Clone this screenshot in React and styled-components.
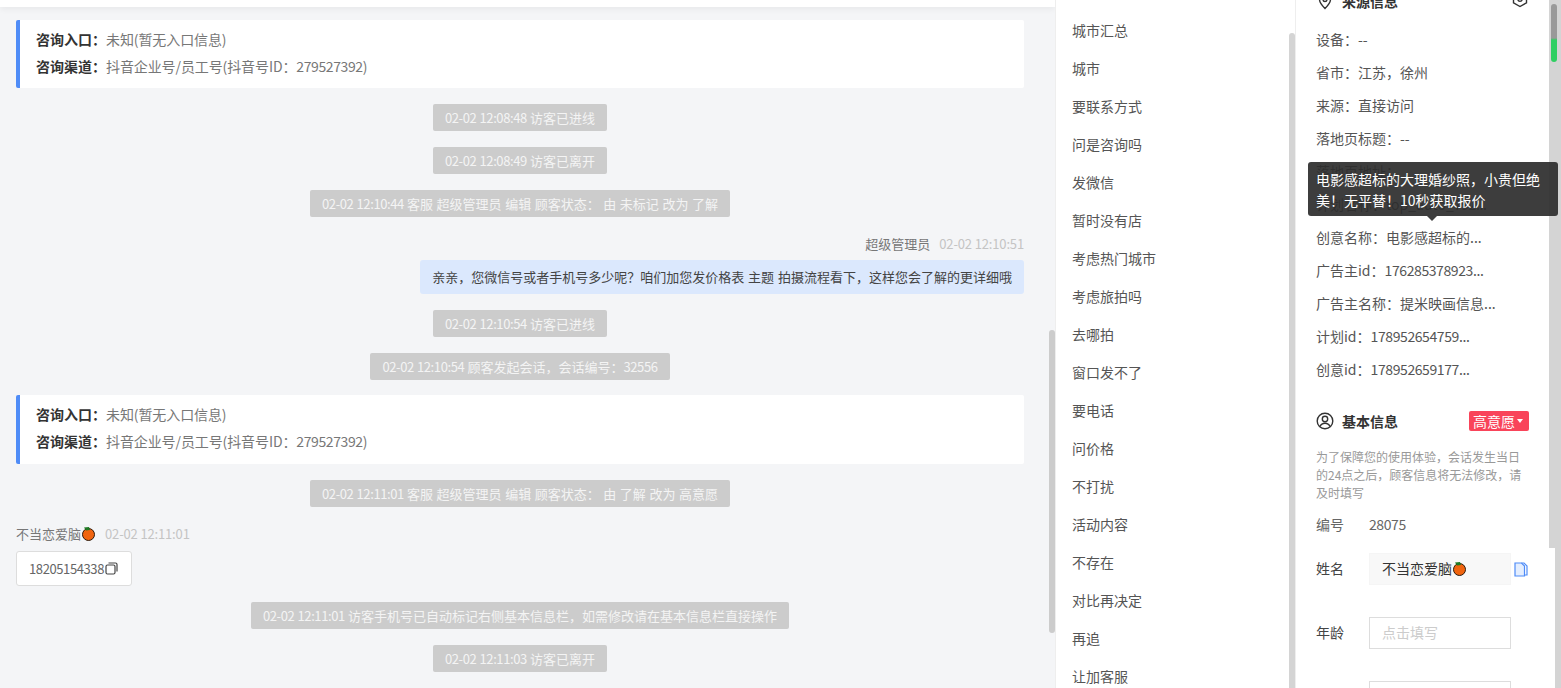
import styled, { createGlobalStyle } from "styled-components";

const GlobalStyle = createGlobalStyle`
  html, body { margin: 0; padding: 0; height: 100%; overflow: hidden; background: #fff; }
  body { font-family: "Noto Sans CJK SC", "Liberation Sans", sans-serif; font-size: 14px; color: #333; }
  * { box-sizing: border-box; }
`;

const tags = ["城市汇总", "城市", "要联系方式", "问是咨询吗", "发微信", "暂时没有店", "考虑热门城市", "考虑旅拍吗", "去哪拍", "窗口发不了", "要电话", "问价格", "不打扰", "活动内容", "不存在", "对比再决定", "再追", "让加客服"];

const sourceRows = [
  ["设备", "--"],
  ["省市", "江苏，徐州"],
  ["来源", "直接访问"],
  ["落地页标题", "--"],
  ["落地页地址", ""],
  ["计划名称", "top_auto_792..."],
  ["创意名称", "电影感超标的..."],
  ["广告主id", "176285378923..."],
  ["广告主名称", "提米映画信息..."],
  ["计划id", "178952654759..."],
  ["创意id", "178952659177..."],
];

// digits in the original font run a bit narrower than the fallback
function Digits({ children }) {
  return children.split(/(\d[\d:.\- ]*)/).map((part, i) =>
    i % 2 ? <Narrow key={i}>{part}</Narrow> : part
  );
}

function Orange() {
  return (
    <svg width="15" height="15" viewBox="0 0 15 15" style={{ flex: "none" }}>
      <circle cx="7.5" cy="8.5" r="6" fill="#f0640f" stroke="#2b1a0c" strokeWidth="1" />
      <path d="M3 1.5 L8 1 L9 4 L5 4.5 Z" fill="#1f7a25" />
    </svg>
  );
}

function Notice({ tall }) {
  return (
    <NoticeCard $tall={tall}>
      <NoticeRow><b>咨询入口：</b>未知(暂无入口信息)</NoticeRow>
      <NoticeRow><b>咨询渠道：</b><Digits>抖音企业号/员工号(抖音号ID：279527392)</Digits></NoticeRow>
    </NoticeCard>
  );
}

function Pill({ children }) {
  return <SystemPill><Digits>{children}</Digits></SystemPill>;
}

export default function App() {
  return (
    <>
      <GlobalStyle />
      <Page>
        <ChatPanel>
          <TopShade />
          <Messages>
            <Notice />
            <Pill>02-02 12:08:48 访客已进线</Pill>
            <Pill>02-02 12:08:49 访客已离开</Pill>
            <Pill>02-02 12:10:44 客服 超级管理员 编辑 顾客状态： 由 未标记 改为 了解</Pill>
            <MessageGroup $mine>
              <Meta>超级管理员<MetaTime><Digits>02-02 12:10:51</Digits></MetaTime></Meta>
              <AgentBubble>亲亲，您微信号或者手机号多少呢？咱们加您发价格表 主题 拍摄流程看下，这样您会了解的更详细哦</AgentBubble>
            </MessageGroup>
            <Pill>02-02 12:10:54 访客已进线</Pill>
            <Pill>02-02 12:10:54 顾客发起会话，会话编号：32556</Pill>
            <Notice tall />
            <Pill>02-02 12:11:01 客服 超级管理员 编辑 顾客状态： 由 了解 改为 高意愿</Pill>
            <MessageGroup>
              <Meta>不当恋爱脑<Orange /><MetaTime><Digits>02-02 12:11:01</Digits></MetaTime></Meta>
              <VisitorBubble>
                <Digits>18205154338</Digits>
                <svg width="13" height="13" viewBox="0 0 13 13" fill="none" stroke="#444" strokeWidth="1.2">
                  <rect x="1" y="3" width="9" height="9" rx="1.5" />
                  <path d="M3.5 1h7a1.5 1.5 0 0 1 1.5 1.5v7" />
                </svg>
              </VisitorBubble>
            </MessageGroup>
            <Pill>02-02 12:11:01 访客手机号已自动标记右侧基本信息栏，如需修改请在基本信息栏直接操作</Pill>
            <Pill>02-02 12:11:03 访客已离开</Pill>
          </Messages>
          <ChatThumb />
        </ChatPanel>

        <TagPanel>
          {tags.map((t) => <TagItem key={t}>{t}</TagItem>)}
          <TagThumb />
        </TagPanel>

        <InfoPanel>
          <SectionHead>
            <svg width="18" height="18" viewBox="0 0 18 18" fill="none" stroke="#333" strokeWidth="1.4">
              <path d="M9 16.5c-3-3-5.500-5.600-5.500-9a5.500 5.500 0 0 1 11 0c0 3.400-2.500 6-5.500 9z" />
              <circle cx="9" cy="7.500" r="2" />
            </svg>
            <SectionTitle>来源信息</SectionTitle>
            <HeadIcon>
              <svg width="18" height="18" viewBox="0 0 18 18" fill="none" stroke="#333" strokeWidth="1.4">
                <path d="M9 1.500l6.500 3.700v7.600L9 16.500l-6.500-3.700V5.200z" />
                <circle cx="9" cy="9" r="2.200" />
              </svg>
            </HeadIcon>
          </SectionHead>
          <SourceList>
            {sourceRows.map(([k, v]) => <SourceRow key={k}><Digits>{`${k}：${v}`}</Digits></SourceRow>)}
            <Tooltip>电影感超标的大理婚纱照，小贵但绝美！无平替！10秒获取报价</Tooltip>
          </SourceList>
          <BasicHead>
            <svg width="18" height="18" viewBox="0 0 18 18" fill="none" stroke="#333" strokeWidth="1.4">
              <circle cx="9" cy="9" r="7.800" />
              <circle cx="9" cy="7" r="2.700" />
              <path d="M4 14.500c1-2.300 3-3.300 5-3.300s4 1 5 3.300" />
            </svg>
            <SectionTitle>基本信息</SectionTitle>
            <IntentBadge>高意愿<Caret /></IntentBadge>
          </BasicHead>
          <Hint>为了保障您的使用体验，会话发生当日的24点之后，顾客信息将无法修改，请及时填写</Hint>
          <FieldRow $h={38} $muted>
            <FieldLabel>编号</FieldLabel>
            <FieldValue><Digits>28075</Digits></FieldValue>
          </FieldRow>
          <FieldRow $h={50}>
            <FieldLabel>姓名</FieldLabel>
            <FieldBox $filled>不当恋爱脑<Orange /></FieldBox>
            <CopyIcon viewBox="0 0 14 15" width="14" height="15" fill="#e4eefe" stroke="#4f8cf7" strokeWidth="1.2">
              <path d="M1 1h6.500L10.500 4v10H1z" />
              <path d="M7.500 1h2.500L13 4v9h-2.500" fill="none" />
            </CopyIcon>
          </FieldRow>
          <FieldRow $h={78}>
            <FieldLabel>年龄</FieldLabel>
            <FieldBox>点击填写</FieldBox>
          </FieldRow>
          <FieldRow $h={50}>
            <FieldLabel />
            <FieldBox />
          </FieldRow>
          <OuterTrack />
          <InnerThumb />
          <MiniThumb />
        </InfoPanel>
      </Page>
    </>
  );
}

const Page = styled.div`
  display: flex;
  width: 1561px;
  height: 688px;
  overflow: hidden;
`;

const Narrow = styled.span`
  letter-spacing: -0.4px;
`;

const ChatPanel = styled.div`
  position: relative;
  width: 1055px;
  flex: none;
  background: #f4f5f7;
  overflow: hidden;
`;

const TopShade = styled.div`
  height: 7px;
  background: #fff;
  box-shadow: 0 2px 6px rgba(0, 0, 0, 0.06);
`;

const Messages = styled.div`
  display: flex;
  flex-direction: column;
  align-items: center;
  gap: 16px;
  width: 1008px;
  margin: 13px 0 0 16px;
`;

const NoticeCard = styled.div`
  width: 100%;
  height: ${(p) => (p.$tall ? 69 : 68)}px;
  margin-top: ${(p) => (p.$tall ? -1 : 0)}px;
  padding: 6px 0 0 16px;
  background: #fff;
  border-left: 4px solid #4f8cf7;
  border-radius: 2px;
  color: #777;
  font-size: 14px;
`;

const NoticeRow = styled.div`
  line-height: 27px;
  letter-spacing: -0.1px;
  b { color: #333; font-weight: 700; letter-spacing: 0; }
`;

const SystemPill = styled.div`
  height: 27px;
  line-height: 27px;
  padding: 0 12px;
  background: #ccc;
  border-radius: 2px;
  color: #f4f4f4;
  font-size: 13px;
  word-spacing: 0.65px;
  white-space: nowrap;
`;

const MessageGroup = styled.div`
  width: 100%;
  display: flex;
  flex-direction: column;
  align-items: ${(p) => (p.$mine ? "flex-end" : "flex-start")};
  margin-top: 2px;
  gap: ${(p) => (p.$mine ? 7 : 8)}px;
`;

const Meta = styled.div`
  display: flex;
  align-items: center;
  height: 18px;
  padding-bottom: 2px;
  color: #777;
  font-size: 13px;
`;

const MetaTime = styled.span`
  margin-left: 9px;
  color: #c4c4c4;
  ${Narrow} { letter-spacing: -0.15px; }
`;

const AgentBubble = styled.div`
  height: 34px;
  line-height: 34px;
  padding: 0 12px;
  background: #dbe8fd;
  border-radius: 3px;
  color: #444;
  font-size: 13px;
  word-spacing: 1px;
  white-space: nowrap;
`;

const VisitorBubble = styled.div`
  display: flex;
  align-items: center;
  height: 35px;
  padding: 0 13px 0 12px;
  background: #fff;
  border: 1px solid #ddd;
  border-radius: 3px;
  color: #666;
  font-size: 13px;
  svg { margin-left: 1px; }
`;

const ChatThumb = styled.div`
  position: absolute;
  left: 1049px;
  top: 330px;
  width: 6px;
  height: 303px;
  background: #ccc;
  border-radius: 3px;
`;

const TagPanel = styled.div`
  position: relative;
  width: 241px;
  flex: none;
  padding: 11px 0 0 16px;
  background: #fff;
  border-left: 1px solid #eee;
  border-right: 1px solid #eee;
  overflow: hidden;
`;

const TagItem = styled.div`
  height: 38px;
  line-height: 38px;
  color: #555;
  font-size: 14px;
`;

const TagThumb = styled.div`
  position: absolute;
  right: 0;
  top: 33px;
  bottom: 0;
  width: 6px;
  background: #d4d4d4;
  border-radius: 3px 3px 0 0;
`;

const InfoPanel = styled.div`
  position: relative;
  flex: 1;
  padding: 0 32px 0 20px;
  background: #fff;
  overflow: hidden;
`;

const SectionHead = styled.div`
  display: flex;
  align-items: center;
  gap: 8px;
  height: 18px;
  margin-top: -8px;
`;

const BasicHead = styled(SectionHead)`
  margin-top: 26px;
`;

const SectionTitle = styled.div`
  font-size: 14px;
  font-weight: 700;
  color: #333;
`;

const HeadIcon = styled.div`
  margin: -4px 0 0 auto;
  height: 18px;
`;

const SourceList = styled.div`
  position: relative;
  margin-top: 13px;
`;

const SourceRow = styled.div`
  height: 33px;
  line-height: 33px;
  color: #555;
  font-size: 14px;
  white-space: nowrap;
`;

const Tooltip = styled.div`
  position: absolute;
  z-index: 2;
  left: -8px;
  top: 139px;
  width: 250px;
  height: 54px;
  padding: 7px 8px;
  background: rgba(45, 45, 45, 0.92);
  border-radius: 3px;
  color: #fff;
  font-size: 14px;
  line-height: 21px;
  &::after {
    content: "";
    position: absolute;
    left: 119px;
    top: 100%;
    border: 5px solid transparent;
    border-top-color: rgba(45, 45, 45, 0.92);
    border-bottom: 0;
  }
`;

const IntentBadge = styled.div`
  display: flex;
  align-items: center;
  gap: 2px;
  margin-left: auto;
  height: 20px;
  padding: 0 6px 0 4px;
  background: #f9445a;
  border-radius: 2px;
  color: #fff;
  font-size: 14px;
`;

const Caret = styled.span`
  border: 3px solid transparent;
  border-top: 4px solid #fff;
  border-bottom: 0;
`;

const Hint = styled.div`
  margin: 18px 0 4px;
  color: #999;
  font-size: 12px;
  line-height: 18px;
`;

const FieldRow = styled.div`
  display: flex;
  align-items: center;
  height: ${(p) => p.$h}px;
  color: ${(p) => (p.$muted ? "#666" : "#444")};
  font-size: 14px;
`;

const FieldLabel = styled.div`
  width: 53px;
  flex: none;
  padding-bottom: 2px;
`;

const FieldValue = styled.div`
  padding-bottom: 2px;
`;

const FieldBox = styled.div`
  display: flex;
  align-items: center;
  width: 142px;
  height: 32px;
  flex: none;
  padding: 0 12px 2px;
  background: ${(p) => (p.$filled ? "#f8f8f8" : "#fff")};
  border: 1px solid ${(p) => (p.$filled ? "#f5f5f5" : "#ddd")};
  color: ${(p) => (p.$filled ? "#333" : "#ccc")};
  font-size: 14px;
`;

const CopyIcon = styled.svg`
  margin-left: 3px;
`;

const OuterTrack = styled.div`
  position: absolute;
  top: 0;
  right: 0;
  bottom: 0;
  width: 6px;
  background: #d4d4d4;
`;

const InnerThumb = styled.div`
  position: absolute;
  top: 0;
  right: 6px;
  width: 6px;
  height: 548px;
  background: #d4d4d4;
`;

const MiniThumb = styled.div`
  position: absolute;
  top: 4px;
  right: 4px;
  width: 6px;
  height: 58px;
  border-radius: 3px;
  background: linear-gradient(#999 0, #999 34px, #2fcf62 36px, #2fcf62 100%);
  filter: blur(0.5px);
`;
